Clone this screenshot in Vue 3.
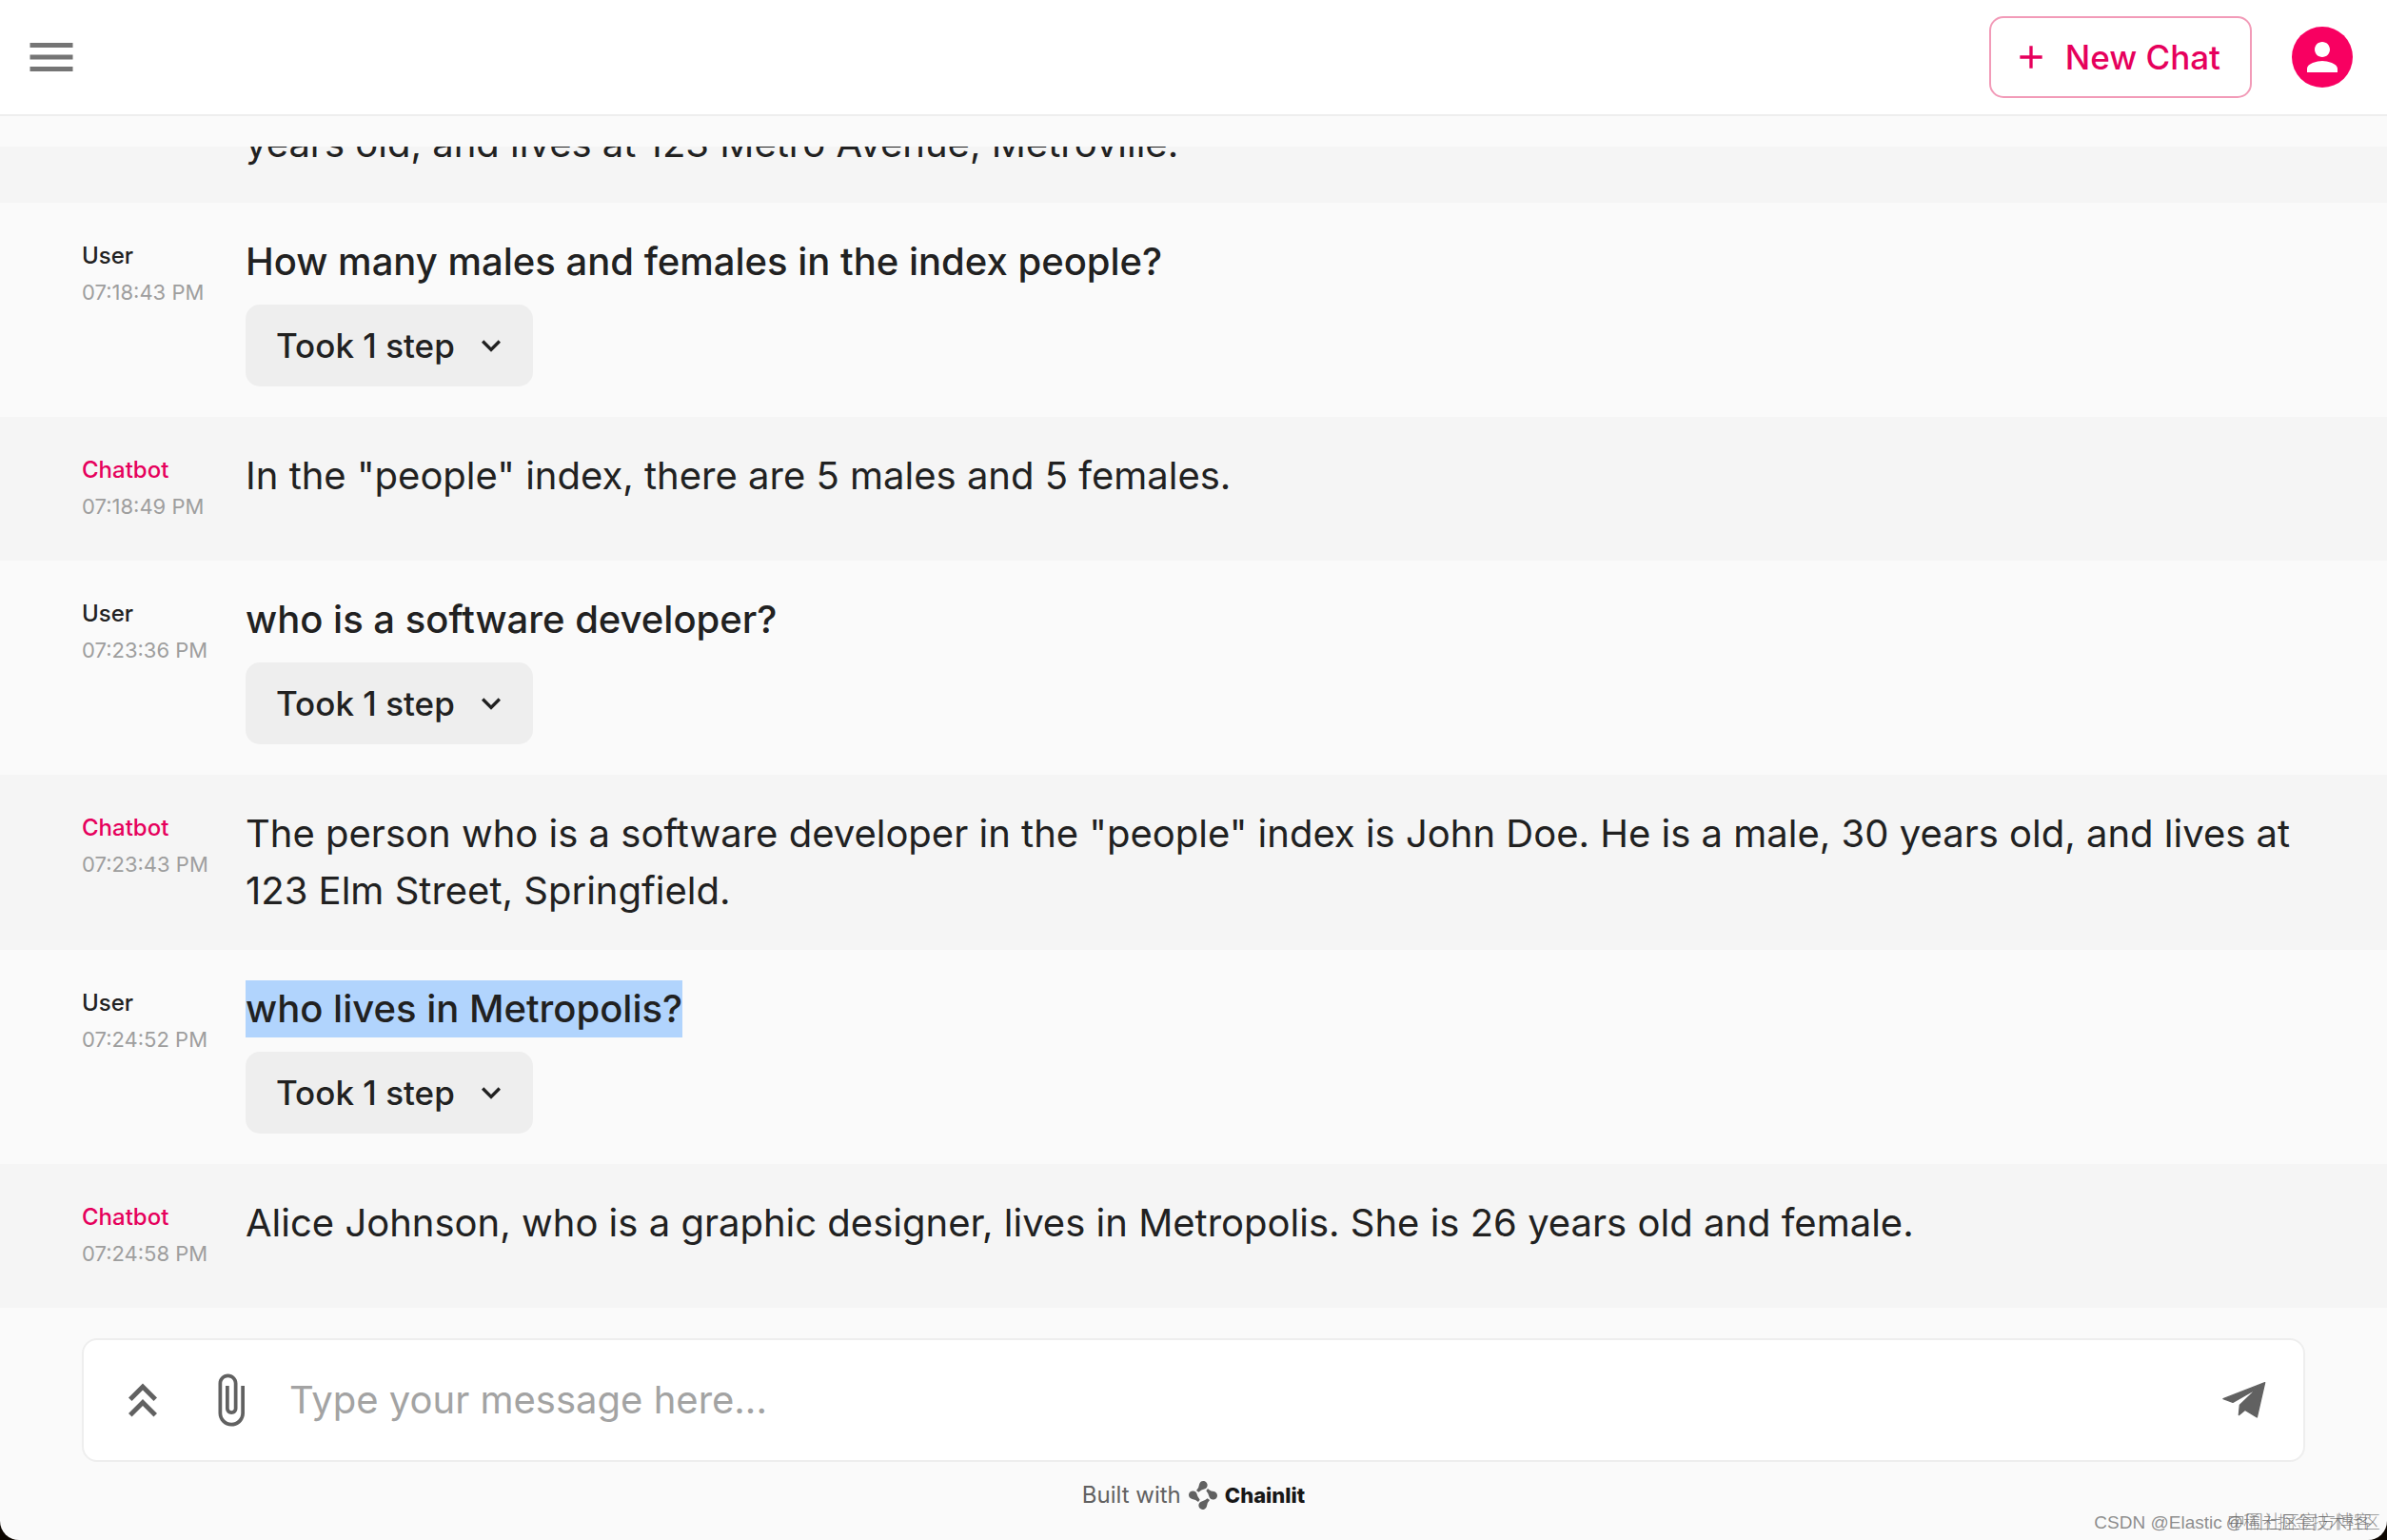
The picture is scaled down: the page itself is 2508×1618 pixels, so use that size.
<script setup>
import { ref } from 'vue'

const draft = ref('')

const messages = [
  { id: 1, role: 'bot', text: 'years old, and lives at 123 Metro Avenue, Metroville.' },
  { id: 2, role: 'user', author: 'User', time: '07:18:43 PM', text: 'How many males and females in the index people?', steps: 'Took 1 step' },
  { id: 3, role: 'bot', author: 'Chatbot', time: '07:18:49 PM', text: 'In the "people" index, there are 5 males and 5 females.' },
  { id: 4, role: 'user', author: 'User', time: '07:23:36 PM', text: 'who is a software developer?', steps: 'Took 1 step' },
  { id: 5, role: 'bot', author: 'Chatbot', time: '07:23:43 PM', text: 'The person who is a software developer in the "people" index is John Doe. He is a male, 30 years old, and lives at 123 Elm Street, Springfield.' },
  { id: 6, role: 'user', author: 'User', time: '07:24:52 PM', text: 'who lives in Metropolis?', steps: 'Took 1 step', selected: true },
  { id: 7, role: 'bot', author: 'Chatbot', time: '07:24:58 PM', text: 'Alice Johnson, who is a graphic designer, lives in Metropolis. She is 26 years old and female.' },
]
</script>

<template>
  <div class="app">
    <header class="topbar">
      <button class="icon-button menu" type="button" aria-label="Open menu">
        <svg viewBox="0 0 24 24"><path d="M3 18h18v-2H3v2zm0-5h18v-2H3v2zm0-7v2h18V6H3z" /></svg>
      </button>
      <div class="actions">
        <button class="new-chat" type="button">
          <svg viewBox="0 0 24 24"><path d="M19 13h-6v6h-2v-6H5v-2h6V5h2v6h6v2z" /></svg>
          <span>New Chat</span>
        </button>
        <button class="avatar" type="button" aria-label="Account">
          <svg viewBox="0 0 24 24"><path d="M12 12c2.21 0 4-1.79 4-4s-1.79-4-4-4-4 1.79-4 4 1.79 4 4 4zm0 2c-2.67 0-8 1.34-8 4v2h16v-2c0-2.66-5.33-4-8-4z" /></svg>
        </button>
      </div>
    </header>

    <main class="messages">
      <article v-for="m in messages" :key="m.id" class="message" :class="m.role">
        <div class="meta">
          <template v-if="m.author">
            <div class="author">{{ m.author }}</div>
            <time class="time">{{ m.time }}</time>
          </template>
        </div>
        <div class="body">
          <p class="text">
            <mark v-if="m.selected">{{ m.text }}</mark>
            <template v-else>{{ m.text }}</template>
          </p>
          <button v-if="m.steps" class="steps" type="button">
            <span>{{ m.steps }}</span>
            <svg viewBox="0 0 24 24"><path d="M7.41 8.59 12 13.17l4.59-4.58L18 10l-6 6-6-6z" /></svg>
          </button>
        </div>
      </article>
    </main>

    <footer class="bottom">
      <form class="composer" @submit.prevent>
        <button class="icon-button" type="button" aria-label="Show history">
          <svg viewBox="0 0 24 24">
            <path d="M6 17.59 7.41 19 12 14.42 16.59 19 18 17.59l-6-6z" />
            <path d="m6 11 1.41 1.41L12 7.83l4.59 4.58L18 11l-6-6z" />
          </svg>
        </button>
        <button class="icon-button" type="button" aria-label="Attach file">
          <svg viewBox="0 0 24 24"><path d="M16.5 6v11.5c0 2.21-1.79 4-4 4s-4-1.79-4-4V5c0-1.38 1.12-2.5 2.5-2.5s2.5 1.12 2.5 2.5v10.5c0 .55-.45 1-1 1s-1-.45-1-1V6H10v9.5c0 1.38 1.12 2.5 2.5 2.5s2.5-1.12 2.5-2.5V5c0-2.21-1.79-4-4-4S7 2.79 7 5v12.5c0 3.04 2.46 5.5 5.5 5.5s5.5-2.46 5.5-5.5V6h-1.5z" /></svg>
        </button>
        <input v-model="draft" class="field" type="text" aria-label="Message" placeholder="Type your message here..." />
        <button class="icon-button" type="submit" aria-label="Send">
          <svg class="plane" viewBox="0 0 180 180">
            <path d="M155 35 L24 86 L54 97 L130 54 L76 106 L73 137 L93 121 L130 144 Z" />
          </svg>
        </button>
      </form>
      <a class="credit" href="#">
        <span>Built with</span>
        <svg viewBox="0 0 90 90">
          <g v-for="turn in [0, 90, 180, 270]" :key="turn" :transform="`rotate(${turn} 45 45)`">
            <path d="M24 30 Q32 22 33 11 A13 13 0 1 1 51 25 Q40 27 31 35 Z" />
          </g>
        </svg>
        <strong>Chainlit</strong>
      </a>
    </footer>

    <div class="watermark first">CSDN @Elastic 中国社区官方博客</div>
    <div class="watermark second">@稀土掘金技术社区</div>
  </div>
</template>

<style>
body {
  margin: 0;
  background: #0c0600;
}
</style>

<style scoped>
.app {
  position: relative;
  display: flex;
  flex-direction: column;
  height: 100vh;
  overflow: hidden;
  border-radius: 0 0 20px 20px;
  background: #fafafa;
  color: #212121;
  font-family: Inter, "Noto Sans CJK SC", sans-serif;
}

button {
  border: 0;
  padding: 0;
  background: none;
  color: inherit;
  font: inherit;
  cursor: pointer;
}

svg {
  display: block;
  flex: none;
  fill: currentColor;
}

.topbar {
  display: flex;
  flex: none;
  align-items: center;
  justify-content: space-between;
  height: 120px;
  padding: 0 36px 0 24px;
  border-bottom: 2px solid #eeeeee;
  background: #ffffff;
}

.icon-button {
  flex: none;
  color: #616161;
}

.icon-button svg {
  width: 60px;
  height: 60px;
}

.icon-button .plane {
  stroke: currentColor;
  stroke-width: 4;
  stroke-linejoin: round;
}

.menu {
  color: #757575;
}

.actions {
  display: flex;
  align-items: center;
  gap: 42px;
}

.new-chat {
  display: flex;
  align-items: center;
  gap: 16px;
  height: 86px;
  box-sizing: border-box;
  padding: 0 31px 0 22px;
  border: 2px solid #f29bb8;
  border-radius: 15px;
  color: #e6005c;
  font-size: 35px;
  font-weight: 500;
}

.new-chat svg {
  width: 40px;
  height: 40px;
}

.avatar {
  display: grid;
  place-items: center;
  width: 64px;
  height: 64px;
  border-radius: 50%;
  background: #f80061;
  color: #ffffff;
}

.avatar svg {
  width: 48px;
  height: 48px;
}

.messages {
  display: flex;
  flex: 1;
  flex-direction: column;
  justify-content: flex-end;
  min-height: 0;
  margin-top: 32px;
  overflow: hidden;
}

.message {
  display: flex;
  flex: none;
  padding: 32px 86px;
}

.message.bot {
  background: #f5f5f5;
}

.meta {
  flex: none;
  width: 172px;
}

.author {
  padding-top: 5px;
  font-size: 24px;
  font-weight: 500;
  line-height: 38px;
}

.bot .author {
  color: #e6005c;
}

.time {
  display: block;
  padding-bottom: 6px;
  color: #9e9e9e;
  font-size: 22px;
  line-height: 38px;
}

.body {
  display: flex;
  flex: 1;
  flex-direction: column;
  align-items: flex-start;
  gap: 15px;
  min-width: 0;
}

.text {
  margin: 0;
  font-size: 40px;
  line-height: 60px;
}

.user .text {
  font-weight: 500;
}

mark {
  display: block;
  background: #b1d4fd;
  color: inherit;
}

.steps {
  display: flex;
  align-items: center;
  gap: 18px;
  height: 86px;
  padding: 0 24px 0 32px;
  border-radius: 15px;
  background: #eeeeee;
  font-size: 35px;
  font-weight: 500;
}

.steps svg {
  width: 40px;
  height: 40px;
}

.bottom {
  display: flex;
  flex: none;
  flex-direction: column;
  align-items: center;
  gap: 16px;
  padding: 32px 86px 28px;
}

.composer {
  display: flex;
  align-items: center;
  gap: 32px;
  width: 100%;
  height: 130px;
  box-sizing: border-box;
  padding: 0 32px;
  border: 2px solid #eeeeee;
  border-radius: 16px;
  background: #ffffff;
}

.field {
  flex: 1;
  min-width: 0;
  padding: 0;
  border: 0;
  outline: 0;
  background: none;
  color: inherit;
  font: inherit;
  font-size: 40px;
  line-height: 60px;
}

.field::placeholder {
  color: #a3a3a3;
  opacity: 1;
}

.credit {
  display: flex;
  align-items: center;
  gap: 8px;
  color: #616161;
  font-size: 24px;
  line-height: 38px;
  text-decoration: none;
}

.credit svg {
  width: 30px;
  height: 30px;
}

.credit strong {
  color: #171717;
  font-size: 22px;
  font-weight: 800;
}

.watermark {
  position: absolute;
  bottom: 4px;
  color: rgba(90, 90, 90, 0.7);
  font-family: "Liberation Sans", "Noto Sans CJK SC", sans-serif;
  font-weight: 300;
  line-height: 28px;
  white-space: nowrap;
}

.first {
  right: 16px;
  font-size: 19px;
}

.second {
  right: 7px;
  font-size: 18px;
}
</style>
